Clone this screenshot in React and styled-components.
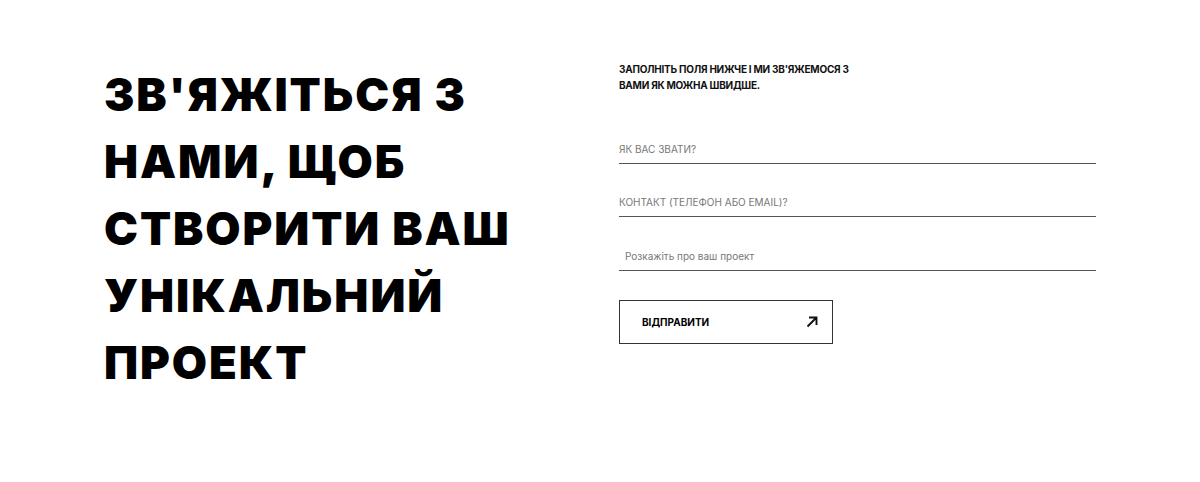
import React from "react";
import styled, { createGlobalStyle } from "styled-components";

const GlobalStyle = createGlobalStyle`
  html, body {
    margin: 0;
    padding: 0;
    background: #fff;
  }
  body {
    font-family: "Inter", "Liberation Sans", sans-serif;
    color: #000;
  }
  * {
    box-sizing: border-box;
  }
`;

const Section = styled.section`
  width: 992px;
  margin: 0 auto;
  padding: 61px 0 0 0;
  display: grid;
  grid-template-columns: 515px 1fr;
  height: 482px;
`;

const Title = styled.h1`
  margin: 0;
  font-family: "Inter", "Liberation Sans", sans-serif;
  font-weight: 900;
  font-size: 45.5px;
  line-height: 67px;
  letter-spacing: 1.9px;
  text-transform: uppercase;
`;

const Form = styled.form`
  display: flex;
  flex-direction: column;
`;

const Intro = styled.p`
  margin: 0 0 31px 0;
  width: 235px;
  font-size: 10px;
  font-weight: 700;
  line-height: 16px;
  letter-spacing: -0.25px;
  text-transform: uppercase;
  color: #111;
`;

const Field = styled.input`
  display: block;
  width: 100%;
  height: 40px;
  margin-top: ${(props) => props.gap || "0"};
  padding: 11px 0 0 0;
  border: 0;
  border-bottom: 1px solid #555;
  font-family: "Inter", "Liberation Sans", sans-serif;
  font-size: 10px;
  color: #222;
  outline: none;
  background: transparent;

  &::placeholder {
    color: #777;
    text-transform: uppercase;
  }
`;

const Message = styled.textarea`
  display: block;
  width: 100%;
  height: 40px;
  margin-top: 14px;
  padding: 18px 6px 0 6px;
  border: 0;
  border-bottom: 1px solid #555;
  font-family: "Inter", "Liberation Sans", sans-serif;
  font-size: 10px;
  line-height: 14px;
  resize: none;
  outline: none;
  background: transparent;

  &::placeholder {
    color: #777;
  }
`;

const Submit = styled.button`
  margin-top: 29px;
  width: 214px;
  height: 44px;
  padding: 0 14px 0 22px;
  display: flex;
  align-items: center;
  justify-content: space-between;
  border: 1px solid #333;
  background: #fff;
  font-family: "Inter", "Liberation Sans", sans-serif;
  font-size: 10px;
  font-weight: 700;
  text-transform: uppercase;
  color: #000;
  cursor: pointer;
`;

// diagonal "send" arrow
const Arrow = () => (
  <svg width="12" height="12" viewBox="0 0 12 12" fill="none">
    <path d="M1.5 10.5 L10.5 1.5 M3 1.5 H10.5 V9" stroke="#111" strokeWidth="1.9" />
  </svg>
);

export default function App() {
  return (
    <>
      <GlobalStyle />
      <Section>
        <Title>
          Зв'яжіться з
          <br />
          нами, щоб
          <br />
          створити ваш
          <br />
          унікальний
          <br />
          проект
        </Title>
        <Form onSubmit={(e) => e.preventDefault()}>
          <Intro>Заполніть поля нижче і ми зв'яжемося з вами як можна швидше.</Intro>
          <Field type="text" placeholder="Як вас звати?" />
          <Field type="text" placeholder="Контакт (телефон або email)?" gap="13px" />
          <Message placeholder="Розкажіть про ваш проект" />
          <Submit type="submit">
            Відправити
            <Arrow />
          </Submit>
        </Form>
      </Section>
    </>
  );
}
